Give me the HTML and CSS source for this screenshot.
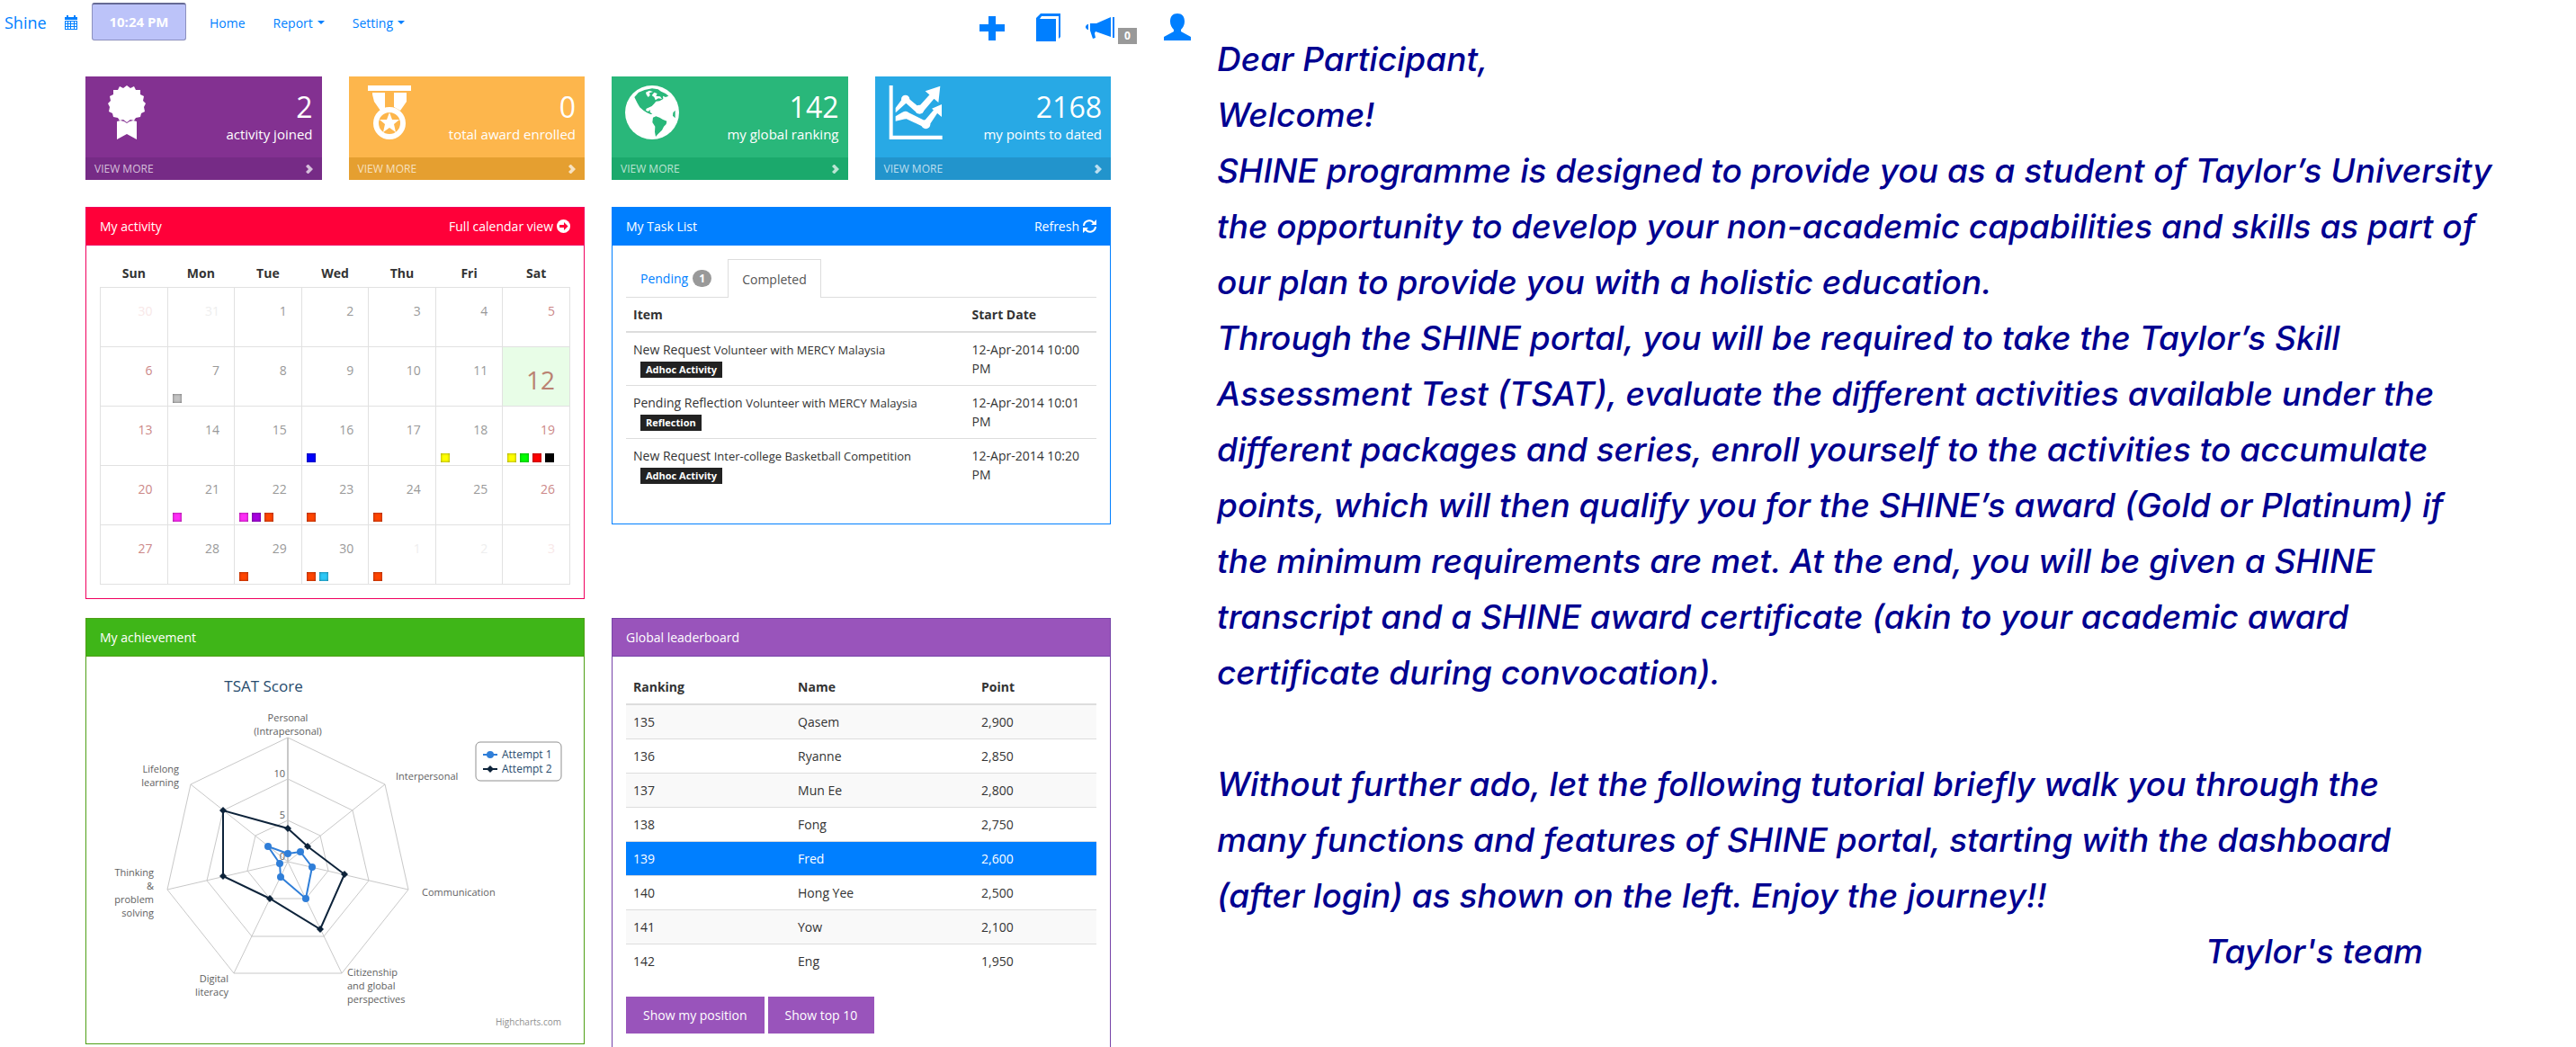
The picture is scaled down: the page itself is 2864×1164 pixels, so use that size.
FILE: index.html
```html
<!DOCTYPE html>
<html lang="en">
<head>
<meta charset="utf-8">
<title>Shine</title>
<link rel="stylesheet" href="styles.css">
</head>
<body>
<div class="page">
<div class="portal">
  <header class="topbar">
    <a class="brand" href="#">Shine</a>
    <a class="cal-link" href="#" aria-label="Calendar"><svg width="14" height="16" viewBox="0 0 14 16"><path fill="currentColor" d="M0 2h2V0h2v2h6V0h2v2h2v3H0z"/><path fill="currentColor" fill-rule="evenodd" d="M0 6h14v10H0zM1 7v2h2V7zM4 7v2h2V7zM7 7v2h3V7zM11 7v2h2V7zM1 10v2h2v-2zM4 10v2h2v-2zM7 10v2h3v-2zM11 10v2h2v-2zM1 13v2h2v-2zM4 13v2h2v-2zM7 13v2h3v-2zM11 13v2h2v-2z"/></svg></a>
    <button class="clock" type="button">10:24 PM</button>
    <nav class="menu">
      <a href="#">Home</a>
      <a href="#">Report<span class="caret"></span></a>
      <a href="#">Setting<span class="caret"></span></a>
    </nav>
    <div class="tools">
      <a href="#" aria-label="Add"><svg width="28" height="30" viewBox="0 0 28 30"><path fill="currentColor" d="M10 3h8v9h10v8H18v10h-8V20H0v-8h10z"/></svg></a>
      <a href="#" aria-label="Library"><svg width="27" height="31" viewBox="0 0 27 31"><path fill="currentColor" d="M5 0h22v26l-2 2V3H6L4 6h18v25H0V5z"/></svg></a>
      <a class="news" href="#" aria-label="Announcements"><svg width="32" height="30" viewBox="0 0 32 30"><path fill="currentColor" d="M30 4h2v23h-2zM28 4v22L11 20l-1 2 1 5-3 1-3-9V11h7zM3 12v6H2l-2-2v-2l2-2z"/></svg><span class="count">0</span></a>
      <a href="#" aria-label="Profile"><svg width="30" height="30" viewBox="0 0 30 30"><path fill="currentColor" d="M15 0c5 0 8 3 8 9 0 4-2 7-4 9v2l11 6v4H0v-4l11-6v-2c-2-2-4-5-4-9 0-6 3-9 8-9z"/></svg></a>
    </div>
  </header>

  <main class="board">
    <section class="stat purple">
      <div class="stat-main">
        <svg class="stat-icon" viewBox="0 0 60 60"><path fill="#fff" d="M31 0l4 3 4-2 2 4 5 0 0 5 4 2-1 5 3 3-2 4 1 5-4 2-1 4-5 1-2 3-4-1-4 3-4-3-4 1-2-3-5-1-1-4-4-2 1-5-2-4 3-3-1-5 4-2 0-5 5 0 2-4 4 2zM20 40l4-1 4 1 3 2 3-2 4-1 4 1v20l-11-6-11 6z"/></svg>
        <div class="stat-text"><strong>2</strong><span>activity joined</span></div>
      </div>
      <a class="stat-more" href="#">VIEW MORE<svg width="8" height="10" viewBox="0 0 8 10"><path fill="currentColor" d="M0 2l2-2 1 0 5 5-5 5H2L0 8l3-3z"/></svg></a>
    </section>
    <section class="stat orange">
      <div class="stat-main">
        <svg class="stat-icon" viewBox="0 0 60 60"><path fill="#fff" d="M6 0h48v6H6zM11 8h14v17l-5 3-7-10-2-8zM35 8h14v10l-7 10-7-4z"/><circle cx="30" cy="42" r="15" fill="none" stroke="#fff" stroke-width="6"/><path fill="#fff" d="M30 30l3 8h8l-6 5 2 9-7-5-7 5 2-9-6-5h8z"/></svg>
        <div class="stat-text"><strong>0</strong><span>total award enrolled</span></div>
      </div>
      <a class="stat-more" href="#">VIEW MORE<svg width="8" height="10" viewBox="0 0 8 10"><path fill="currentColor" d="M0 2l2-2 1 0 5 5-5 5H2L0 8l3-3z"/></svg></a>
    </section>
    <section class="stat green">
      <div class="stat-main">
        <svg class="stat-icon" viewBox="15 15 180 180"><circle cx="105" cy="105" r="90" fill="#fff"/><path class="land" d="M46 54L60 38L80 30L105 25L125 28L135 35L150 42L160 50L150 54L141 50L142 60L130 67L118 68L112 76L104 84L96 88L86 92L84 98L92 102L98 96L98 104L106 110L100 111L88 106L76 98L64 88L56 74ZM108 122L118 118L130 122L140 128L154 134L152 144L144 152L138 164L124 178L117 186L114 170L115 152L106 138ZM182 98L175 106L174 116L182 124Z"/><path fill="#fff" d="M84 38L96 32L108 36L96 40L98 48L92 54L86 46ZM112 38L122 42L118 50L132 52L138 60L126 58L116 64L112 54L104 48Z"/></svg>
        <div class="stat-text"><strong>142</strong><span>my global ranking</span></div>
      </div>
      <a class="stat-more" href="#">VIEW MORE<svg width="8" height="10" viewBox="0 0 8 10"><path fill="currentColor" d="M0 2l2-2 1 0 5 5-5 5H2L0 8l3-3z"/></svg></a>
    </section>
    <section class="stat blue">
      <div class="stat-main">
        <svg class="stat-icon" viewBox="16 15 180 180"><path fill="#fff" d="M18 15h12v167h165v13H18zM188 17L182 72L138 34ZM193 78V120L160 92ZM39 90L64 56L80 56L116 86L156 42L170 56L128 106L110 106L74 74L39 106ZM39 118L62 104L80 104L136 132L170 92L182 102L150 150L130 152L74 126L39 134Z"/><g fill="#fff"><circle cx="72" cy="61" r="14"/><circle cx="119" cy="95" r="15"/><circle cx="72" cy="114" r="13"/><circle cx="140" cy="145" r="15"/></g></svg>
        <div class="stat-text"><strong>2168</strong><span>my points to dated</span></div>
      </div>
      <a class="stat-more" href="#">VIEW MORE<svg width="8" height="10" viewBox="0 0 8 10"><path fill="currentColor" d="M0 2l2-2 1 0 5 5-5 5H2L0 8l3-3z"/></svg></a>
    </section>

    <section class="panel activity">
      <header class="panel-head"><h2>My activity</h2><a href="#">Full calendar view <svg width="15" height="15" viewBox="0 0 15 15"><circle cx="7.500" cy="7.500" r="7.500" fill="#fff"/><path fill="#ff0039" d="M3 6h5V3l4.500 4.500L8 12V9H3z"/></svg></a></header>
      <div class="panel-body">
        <table class="calendar">
          <thead><tr><th>Sun</th><th>Mon</th><th>Tue</th><th>Wed</th><th>Thu</th><th>Fri</th><th>Sat</th></tr></thead>
          <tbody>
            <tr><td class="out">30</td><td class="out">31</td><td>1</td><td>2</td><td>3</td><td>4</td><td>5</td></tr>
            <tr><td>6</td><td>7<div class="events"><i class="c-grey"></i></div></td><td>8</td><td>9</td><td>10</td><td>11</td><td class="today">12</td></tr>
            <tr><td>13</td><td>14</td><td>15</td><td>16<div class="events"><i class="c-blue"></i></div></td><td>17</td><td>18<div class="events"><i class="c-yellow"></i></div></td><td>19<div class="events"><i class="c-yellow"></i><i class="c-green"></i><i class="c-red"></i><i class="c-black"></i></div></td></tr>
            <tr><td>20</td><td>21<div class="events"><i class="c-pink"></i></div></td><td>22<div class="events"><i class="c-pink"></i><i class="c-violet"></i><i class="c-orange"></i></div></td><td>23<div class="events"><i class="c-orange"></i></div></td><td>24<div class="events"><i class="c-orange"></i></div></td><td>25</td><td>26</td></tr>
            <tr><td>27</td><td>28</td><td>29<div class="events"><i class="c-orange"></i></div></td><td>30<div class="events"><i class="c-orange"></i><i class="c-sky"></i></div></td><td class="out">1<div class="events"><i class="c-orange"></i></div></td><td class="out">2</td><td class="out">3</td></tr>
          </tbody>
        </table>
      </div>
    </section>

    <section class="panel tasks">
      <header class="panel-head"><h2>My Task List</h2><a href="#">Refresh <svg width="15" height="15" viewBox="0 0 15 15"><path fill="none" stroke="#fff" stroke-width="2" d="M1 7a6 6 0 0 1 11-3M14 8a6 6 0 0 1-11 3"/><path fill="#fff" d="M15 0v6H9zM0 15V9h6z"/></svg></a></header>
      <div class="panel-body">
        <nav class="tabs"><a href="#">Pending <span class="pill">1</span></a><a class="active" href="#">Completed</a></nav>
        <table class="list task-table">
          <thead><tr><th>Item</th><th>Start Date</th></tr></thead>
          <tbody>
            <tr><td>New Request <small>Volunteer with MERCY Malaysia</small><br><span class="tag">Adhoc Activity</span></td><td>12-Apr-2014 10:00 PM</td></tr>
            <tr><td>Pending Reflection <small>Volunteer with MERCY Malaysia</small><br><span class="tag">Reflection</span></td><td>12-Apr-2014 10:01 PM</td></tr>
            <tr><td>New Request <small>Inter-college Basketball Competition</small><br><span class="tag">Adhoc Activity</span></td><td>12-Apr-2014 10:20 PM</td></tr>
          </tbody>
        </table>
      </div>
    </section>

    <section class="panel achievement">
      <header class="panel-head"><h2>My achievement</h2></header>
      <div class="panel-body">
        <svg class="chart" viewBox="0 0 523 400" role="img" aria-label="TSAT Score">
          <g class="grid">
            <path d="M209 75L317 127L343 244L269 337H149L75 244L101 127Z"/>
            <path d="M209 121L281 156L299 234L249 296H169L119 234L137 156Z"/>
            <path d="M209 167L245 184L254 223L229 254H189L164 223L173 184Z"/>
            <path d="M209 213L317 127M209 213L343 244M209 213L269 337M209 213L149 337M209 213L75 244M209 213L101 127"/>
            <path class="axis" d="M209 213V75"/>
          </g>
          <text class="title" x="182" y="24" text-anchor="middle">TSAT Score</text>
          <g class="label" text-anchor="middle"><text x="209" y="57">Personal</text><text x="209" y="72">(Intrapersonal)</text></g>
          <g class="label"><text x="329" y="122">Interpersonal</text><text x="358" y="251">Communication</text><text x="275" y="340">Citizenship</text><text x="275" y="355">and global</text><text x="275" y="370">perspectives</text></g>
          <g class="label" text-anchor="end"><text x="143" y="347">Digital</text><text x="143" y="362">literacy</text><text x="60" y="229">Thinking</text><text x="60" y="244">&amp;</text><text x="60" y="259">problem</text><text x="60" y="274">solving</text><text x="88" y="114">Lifelong</text><text x="88" y="129">learning</text><text x="206" y="119">10</text><text x="206" y="165">5</text><text x="206" y="211">0</text></g>
          <g class="s1"><path d="M209 204L223 202L236 219L229 254L201 230L200 215L187 196Z"/><circle cx="209" cy="204" r="4"/><circle cx="223" cy="202" r="4"/><circle cx="236" cy="219" r="4"/><circle cx="229" cy="254" r="4"/><circle cx="201" cy="230" r="4"/><circle cx="200" cy="215" r="4"/><circle cx="187" cy="196" r="4"/></g>
          <g class="s2"><path class="line" d="M209 176L231 196L272 227L245 288L189 254L137 229L137 156Z"/><path class="dots" d="M209 172l4 4-4 4-4-4zM231 192l4 4-4 4-4-4zM272 223l4 4-4 4-4-4zM245 284l4 4-4 4-4-4zM189 250l4 4-4 4-4-4zM137 225l4 4-4 4-4-4zM137 152l4 4-4 4-4-4z"/></g>
          <rect class="legend" x="418" y="80" width="95" height="43" rx="5"/>
          <g class="s1"><path d="M426 94h16"/><circle cx="434" cy="94" r="4"/></g>
          <g class="s2"><path class="line" d="M426 110h16"/><path class="dots" d="M434 106l4 4-4 4-4-4z"/></g>
          <g class="legend-text"><text x="447" y="98">Attempt 1</text><text x="447" y="114">Attempt 2</text></g>
          <text class="credit" x="513" y="395" text-anchor="end">Highcharts.com</text>
        </svg>
      </div>
    </section>

    <section class="panel leaderboard">
      <header class="panel-head"><h2>Global leaderboard</h2></header>
      <div class="panel-body">
        <table class="list rank-table">
          <thead><tr><th>Ranking</th><th>Name</th><th>Point</th></tr></thead>
          <tbody>
            <tr><td>135</td><td>Qasem</td><td>2,900</td></tr>
            <tr><td>136</td><td>Ryanne</td><td>2,850</td></tr>
            <tr><td>137</td><td>Mun Ee</td><td>2,800</td></tr>
            <tr><td>138</td><td>Fong</td><td>2,750</td></tr>
            <tr class="me"><td>139</td><td>Fred</td><td>2,600</td></tr>
            <tr><td>140</td><td>Hong Yee</td><td>2,500</td></tr>
            <tr><td>141</td><td>Yow</td><td>2,100</td></tr>
            <tr><td>142</td><td>Eng</td><td>1,950</td></tr>
          </tbody>
        </table>
        <div class="actions"><button type="button">Show my position</button><button type="button">Show top 10</button></div>
      </div>
    </section>
  </main>
</div>

<article class="letter">
  <p>Dear Participant,</p>
  <p>Welcome!</p>
  <p>SHINE programme is designed to provide you as a student of Taylor’s University<br>the opportunity to develop your non-academic capabilities and skills as part of<br>our plan to provide you with a holistic education.</p>
  <p>Through the SHINE portal, you will be required to take the Taylor’s Skill<br>Assessment Test (TSAT), evaluate the different activities available under the<br>different packages and series, enroll yourself to the activities to accumulate<br>points, which will then qualify you for the SHINE’s award (Gold or Platinum) if<br>the minimum requirements are met. At the end, you will be given a SHINE<br>transcript and a SHINE award certificate (akin to your academic award<br>certificate during convocation).</p>
  <p class="closing">Without further ado, let the following tutorial briefly walk you through the<br>many functions and features of SHINE portal, starting with the dashboard<br>(after login) as shown on the left. Enjoy the journey!!</p>
  <p class="sign">Taylor's team</p>
</article>
</div>
</body>
</html>
```
FILE: styles.css
```css
* { box-sizing: border-box; }
html, body { height: 100%; }
body { margin: 0; overflow: hidden; background: #fff; color: #333; font: 14px/21px "Segoe UI", "Open Sans", sans-serif; }
a { color: #007fff; text-decoration: none; }
h2, p { margin: 0; font-weight: 400; }
svg { display: block; }
table { width: 100%; border-collapse: collapse; table-layout: fixed; }
button { font: inherit; border: 0; }

.page { display: grid; grid-template-columns: 1330fr 1534fr; }

.topbar { display: flex; align-items: center; height: 50px; padding: 0 6px 0 5px; }
.brand { font-size: 18px; width: 67px; }
.cal-link { width: 30px; }
.clock { width: 105px; height: 42px; padding: 0; margin: 0 26px 2px 0; border: 1px solid #8c90be; border-top: 2px solid #666a94; border-radius: 3px; background: #bcc3f9; color: #fff; font-size: 15px; font-weight: 700; }
.menu { display: flex; gap: 31px; }
.menu a { display: flex; align-items: center; gap: 5px; }
.caret { border: 4px solid transparent; border-top-color: currentColor; border-bottom: 0; }
.tools { display: flex; align-items: flex-start; gap: 35px; margin-left: auto; padding-top: 10px; }
.tools a { display: flex; }
.news { margin-right: -5px; margin-left: -7px; }
.count { width: 21px; height: 18px; margin: 16px 0 -4px 4px; background: #999; color: #fff; font-size: 12px; line-height: 18px; font-weight: 700; text-align: center; }

.board { display: grid; grid-template-columns: repeat(4, 1fr); column-gap: 30px; align-items: start; max-width: 1140px; margin: 35px auto 0; }
.stat { color: #fff; margin-bottom: 30px; }
.stat-main { display: flex; justify-content: space-between; height: 90px; padding: 10px 10px 0 15px; }
.stat-icon { width: 60px; height: 60px; }
.stat-text { display: flex; flex-direction: column; text-align: right; padding-top: 4px; font-size: 15px; }
.stat-text strong { font-size: 32px; line-height: 40px; font-weight: 400; }
.stat-more { display: flex; align-items: center; justify-content: space-between; height: 25px; padding: 0 10px; font-size: 12px; color: rgba(255, 255, 255, .7); }
.purple { background: #833191; } .purple .stat-more { background: #762b86; }
.orange { background: #fdb64c; } .orange .stat-more { background: #e59f30; }
.green { background: #29b77a; } .green .stat-more { background: #1ba96c; }
.blue { background: #28a9e5; } .blue .stat-more { background: #2294cc; }
.land { fill: #29b77a; }

.panel { grid-column: span 2; border: 1px solid var(--edge); margin-bottom: 21px; }
.panel-head { display: flex; justify-content: space-between; padding: 10px 15px; border-bottom: 1px solid var(--edge); background: var(--tone); color: #fff; }
.panel-head h2 { font-size: 14px; line-height: 21px; }
.panel-head a { display: flex; gap: 4px; color: #fff; align-items: center; }
.panel-body { padding: 15px; }
.activity { --tone: #ff0039; --edge: #f0005e; }
.tasks { --tone: #007fff; --edge: #007fff; }
.achievement { --tone: #3fb618; --edge: #4e9f15; }
.leaderboard { --tone: #9954bb; --edge: #7643a8; }

.calendar th { height: 31px; padding: 0; text-align: center; }
.calendar td { position: relative; height: 66px; padding: 15px 16px 0 0; border: 1px solid #e1e1e1; vertical-align: top; text-align: right; font-size: 14px; color: #999; }
.calendar td:first-child, .calendar td:last-child { color: #c88; }
.calendar td.out { color: #eee; }
.calendar td.out:first-child, .calendar td.out:last-child { color: #f8e8e8; }
.calendar td.today { background: #e8fde7; color: #ba8272; font-size: 28px; padding-top: 26px; }
.events { position: absolute; left: 5px; bottom: 3px; display: flex; gap: 4px; }
.events i { width: 10px; height: 10px; box-shadow: inset 0 0 3px rgba(0, 0, 0, .5); }
.c-grey { background: #c3c3c3; } .c-blue { background: #00f; } .c-yellow { background: #ff0; } .c-green { background: #0f0; }
.c-red { background: #f00; } .c-black { background: #000; } .c-pink { background: #ff2df7; } .c-violet { background: #a800e0; }
.c-orange { background: #ff4500; } .c-sky { background: #2cc8f7; }

.tabs { display: flex; gap: 2px; border-bottom: 1px solid #ddd; }
.tabs a { display: flex; align-items: center; gap: 5px; height: 42px; padding: 0 15px; border: 1px solid transparent; border-bottom: 0; }
.tabs .active { height: 43px; margin-bottom: -1px; border-color: #ddd; background: #fff; color: #555; }
.pill { width: 21px; height: 19px; border-radius: 10px; background: #999; color: #fff; font-size: 12px; line-height: 19px; font-weight: 700; text-align: center; }
.list th { height: 38px; padding: 0 8px; text-align: left; border-bottom: 2px solid #ddd; }
.list td { padding: 8px; vertical-align: top; border-top: 1px solid #ddd; }
.task-table th:first-child { width: 72%; }
.task-table { margin-bottom: 21px; }
small { font-size: 13px; line-height: 1; }
.tag { margin-left: 8px; padding: 1px 6px 2px; background: #222; color: #fff; font-size: 11px; line-height: 1; font-weight: 700; }
.rank-table th:nth-child(1) { width: 35%; }
.rank-table th:nth-child(2) { width: 39%; }
.rank-table tbody tr:nth-child(odd) { background: #f9f9f9; }
.rank-table tbody tr.me { background: #007fff; color: #fff; }
.actions { display: flex; gap: 4px; margin-top: 21px; }
.actions button { height: 41px; padding: 0 19px; background: #9954bb; color: #fff; }

.chart { width: 100%; }
.grid path { fill: none; stroke: #c8c8c8; }
.grid .axis { stroke-width: 2; }
.title { font-size: 17px; fill: #274b6d; }
.label { font-size: 11px; fill: #606060; }
.s1 { fill: #2f7ed8; }
.s1 path { fill: none; stroke: #2f7ed8; stroke-width: 2; }
.s2 .line { fill: none; stroke: #0d233a; stroke-width: 2; }
.s2 .dots { fill: #0d233a; }
.legend { fill: #fff; stroke: #909090; }
.legend-text { font-size: 12px; fill: #274b6d; }
.credit { font-size: 10px; fill: #909090; }

.letter { padding: 35px 80px 0 23px; color: #000090; font: italic 37px/62px "Segoe Print", Inter, sans-serif; white-space: nowrap; }
.letter p { font-weight: 500; }
.closing { margin-top: 62px; }
.letter .sign { padding-right: 90px; text-align: right; }
```
